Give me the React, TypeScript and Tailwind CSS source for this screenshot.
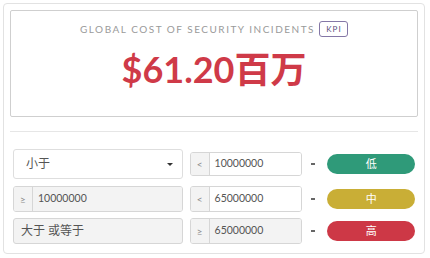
const FONT = "font-['Lato','Noto_Sans_CJK_SC',sans-serif]";

interface Level {
  label: string;
  color: string;
}

function Addon({ sign }: { sign: string }) {
  return (
    <div className="flex h-full w-[19px] shrink-0 items-center justify-center border-r border-[#d6d6d6] bg-[#f3f3f3] text-[10px] text-[#888]">
      {sign}
    </div>
  );
}

function InputGroup({ sign, value, disabled = false }: { sign: string; value: string; disabled?: boolean }) {
  return (
    <div className="flex h-full w-full overflow-hidden rounded-[3px] border border-[#d6d6d6]">
      <Addon sign={sign} />
      <div
        className={`flex flex-1 items-center pl-[5px] text-[10.5px] text-[#555] ${disabled ? 'bg-[#f3f3f3]' : 'bg-white'}`}
      >
        {value}
      </div>
    </div>
  );
}

function Pill({ level }: { level: Level }) {
  return (
    <div
      className={`flex h-[20px] w-[88px] items-center justify-center rounded-full text-[11px] text-white ${level.color}`}
    >
      {level.label}
    </div>
  );
}

function Dash() {
  return (
    <div className="flex w-[25px] shrink-0 items-center pl-[9px]">
      <div className="h-[2px] w-[4px] bg-[#666]" />
    </div>
  );
}

export default function App() {
  const low: Level = { label: '低', color: 'bg-[#2f9a79]' };
  const mid: Level = { label: '中', color: 'bg-[#c9ae36]' };
  const high: Level = { label: '高', color: 'bg-[#cd3846]' };

  return (
    <div className={`h-[258px] w-[430px] bg-white pl-[3px] pt-[3px] ${FONT}`}>
      <div className="flex h-[251px] w-[422px] flex-col rounded-[4px] border border-[#e2e2e2] p-[6px]">
        {/* KPI box */}
        <div className="flex h-[107px] flex-col items-center rounded-[2px] border border-[#cfcfcf] pt-[10px]">
          <div className="flex h-[16px] items-center">
            <span className="text-[10px] tracking-[1.5px] text-[#9a9a9a]">GLOBAL COST OF SECURITY INCIDENTS</span>
            <span className="ml-[4px] flex h-[16px] w-[29px] items-center justify-center rounded-[3px] border border-[#8477a6] pl-[1px] text-[8px] tracking-[1px] text-[#5b5080]">
              KPI
            </span>
          </div>
          <div className="mt-[10px] text-[36px] font-bold leading-[44px] text-[#cf3a48]">$61.20百万</div>
        </div>

        <div className="mt-[14px] h-px bg-[#e6e6e6]" />

        {/* thresholds */}
        <div className="mt-[17px] flex flex-col px-[3px]">
          <div className="flex h-[30px] items-center">
            <div className="flex h-[30px] w-[170px] items-center justify-between rounded-[3px] border border-[#dedede] bg-white pl-[12px] pr-[9px] text-[12px] text-[#555]">
              <span>小于</span>
              <span className="h-0 w-0 border-x-[3px] border-t-[3px] border-x-transparent border-t-[#333]" />
            </div>
            <div className="ml-[7px] h-[24px] w-[113px]">
              <InputGroup sign="<" value="10000000" />
            </div>
            <Dash />
            <Pill level={low} />
          </div>

          <div className="mt-[7px] flex h-[26px] items-center">
            <div className="h-[26px] w-[170px]">
              <InputGroup sign="≥" value="10000000" disabled />
            </div>
            <div className="ml-[7px] h-[26px] w-[113px]">
              <InputGroup sign="<" value="65000000" />
            </div>
            <Dash />
            <Pill level={mid} />
          </div>

          <div className="mt-[6px] flex h-[26px] items-center">
            <div className="flex h-[26px] w-[170px] items-center rounded-[3px] border border-[#d6d6d6] bg-[#f3f3f3] pl-[7px] text-[12px] text-[#555]">
              大于 或等于
            </div>
            <div className="ml-[7px] h-[26px] w-[113px]">
              <InputGroup sign="≥" value="65000000" disabled />
            </div>
            <Dash />
            <Pill level={high} />
          </div>
        </div>
      </div>
    </div>
  );
}
